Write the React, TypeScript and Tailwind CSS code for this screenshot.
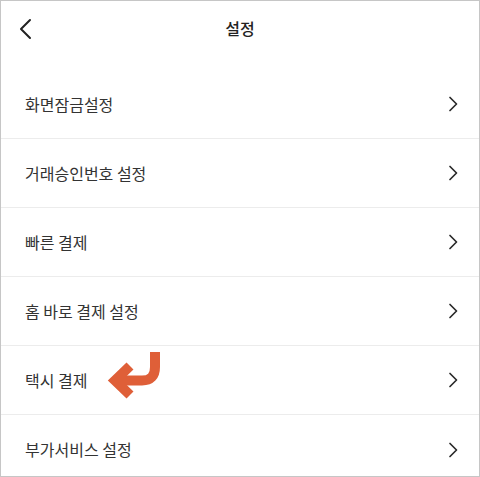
import React from "react";

const items = [
  "화면잠금설정",
  "거래승인번호 설정",
  "빠른 결제",
  "홈 바로 결제 설정",
  "택시 결제",
  "부가서비스 설정",
];

function ChevronRight() {
  return (
    <svg width="12" height="16" viewBox="0 0 12 16" fill="none">
      <path d="M3 1.5 L9.5 8 L3 14.5" stroke="#2a2a2a" strokeWidth="1.7" strokeLinecap="round" strokeLinejoin="round" />
    </svg>
  );
}

function Arrow() {
  return (
    <svg width="60" height="52" viewBox="0 0 60 52" fill="none" className="absolute left-[104px] top-[5px]">
      <path d="M50 1 V16 Q50 29.5 37 29.5 H16" stroke="#df5f38" strokeWidth="10" />
      <path d="M25 15 L10 29.5 L25 44" stroke="#df5f38" strokeWidth="10" strokeLinejoin="miter" />
    </svg>
  );
}

export default function App() {
  return (
    <div
      className="w-[480px] h-[477px] border border-[#c6c6c6] bg-white flex flex-col overflow-hidden"
      style={{ fontFamily: '"Noto Sans CJK KR", "Noto Sans", sans-serif' }}
    >
      <div className="h-[69px] shrink-0 relative flex items-center justify-center">
        <svg width="16" height="22" viewBox="0 0 16 22" fill="none" className="absolute left-[16px] top-[17px]">
          <path d="M13 2 L4 11 L13 20" stroke="#222" strokeWidth="2" strokeLinecap="round" strokeLinejoin="round" />
        </svg>
        <span className="text-[16px] font-medium text-[#222] -mt-[16px]">설정</span>
      </div>
      {items.map((t, i) => (
        <div
          key={t}
          className={`relative h-[69px] shrink-0 flex items-center justify-between pl-[24px] pr-[20px] ${
            i < items.length - 1 ? "border-b border-[#ececec]" : ""
          }`}
        >
          <span className="text-[16px] text-[#333] -mt-[1px]">{t}</span>
          <ChevronRight />
          {t === "택시 결제" && <Arrow />}
        </div>
      ))}
    </div>
  );
}
